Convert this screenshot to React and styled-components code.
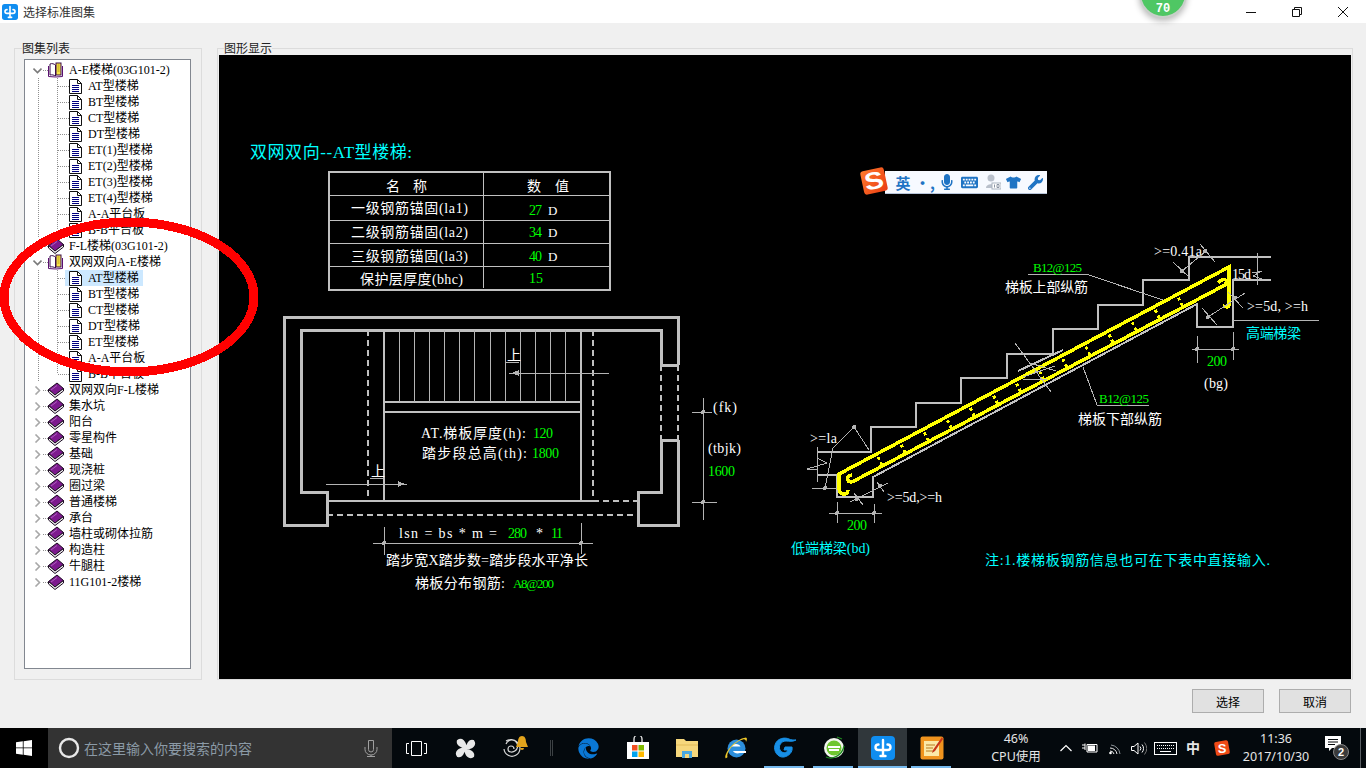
import React from 'react'
import styled, { createGlobalStyle } from 'styled-components'
import { FaMicrophone, FaKeyboard, FaTshirt, FaWrench, FaUser, FaEdge } from 'react-icons/fa'

const Global = createGlobalStyle`
  html, body { margin: 0; padding: 0; overflow: hidden; }
  body { font-family: "Noto Sans CJK SC", "Noto Sans", sans-serif; }
`

const TREE = [
  { label: 'A-E楼梯(03G101-2)', leaves: ['AT型楼梯', 'BT型楼梯', 'CT型楼梯', 'DT型楼梯', 'ET(1)型楼梯', 'ET(2)型楼梯', 'ET(3)型楼梯', 'ET(4)型楼梯', 'A-A平台板', 'B-B平台板'] },
  { label: 'F-L楼梯(03G101-2)' },
  { label: '双网双向A-E楼梯', leaves: ['AT型楼梯', 'BT型楼梯', 'CT型楼梯', 'DT型楼梯', 'ET型楼梯', 'A-A平台板', 'B-B平台板'], selected: 0 },
  { label: '双网双向F-L楼梯' },
  { label: '集水坑' },
  { label: '阳台' },
  { label: '零星构件' },
  { label: '基础' },
  { label: '现浇桩' },
  { label: '圈过梁' },
  { label: '普通楼梯' },
  { label: '承台' },
  { label: '墙柱或砌体拉筋' },
  { label: '构造柱' },
  { label: '牛腿柱' },
  { label: '11G101-2楼梯' },
]

const vdots = 'repeating-linear-gradient(to bottom, #8f8f8f 0 1px, transparent 1px 2px)'
const hdots = 'repeating-linear-gradient(to right, #8f8f8f 0 1px, transparent 1px 2px)'

const Page = styled.div`
  position: relative;
  width: 1366px;
  height: 768px;
  display: flex;
  flex-direction: column;
  overflow: hidden;
  background: #f0f0f0;
`
const TitleBar = styled.div`
  height: 23px;
  background: #fff;
  display: flex;
  align-items: center;
  padding-left: 2px;
  flex: none;
`
const TitleText = styled.span`
  margin-left: 5px;
  font-size: 12px;
  line-height: 16px;
  color: #333;
`
const WinControls = styled.div`
  margin-left: auto;
  display: flex;
`
const WinButton = styled.div`
  width: 46px;
  height: 21px;
  display: flex;
  align-items: center;
  justify-content: center;
`
const Body = styled.div`
  flex: 1;
  min-height: 0;
  display: flex;
  flex-direction: column;
  padding: 18px 13px 0 14px;
`
const Panels = styled.div`
  height: 639px;
  display: flex;
  gap: 15px;
`
const Group = styled.fieldset`
  margin: 0;
  padding: ${p => p.$pad};
  width: ${p => p.$w}px;
  flex: none;
  min-width: 0;
  box-sizing: border-box;
  border: 1px solid #dcdcdc;
`
const Legend = styled.legend`
  margin-left: ${p => p.$ml}px;
  padding: 0;
  font-size: 12px;
  line-height: 14px;
  color: #222;
  font-family: "Noto Sans CJK SC", sans-serif;
`
const TreeBox = styled.div`
  height: 610px;
  box-sizing: border-box;
  border: 1px solid #828790;
  background: #fff;
  padding-top: 2px;
`
const NodeRow = styled.div`
  height: 16px;
  display: flex;
  align-items: center;
  padding-left: 8px;
  font: 12px/16px "Liberation Serif", "Noto Sans CJK SC", serif;
  color: #000;
  white-space: nowrap;
  background: ${hdots} 18px 8px / 5px 1px no-repeat;
`
const LeafRow = styled.div`
  height: 16px;
  display: flex;
  align-items: center;
  padding-left: 40px;
  font: 12px/16px "Liberation Serif", "Noto Sans CJK SC", serif;
  color: #000;
  white-space: nowrap;
  background:
    ${vdots} 13px 0 / 1px 100% no-repeat,
    ${vdots} 32px 0 / 1px ${p => (p.$last ? '8px' : '100%')} no-repeat,
    ${hdots} 33px 8px / 11px 1px no-repeat;
`
const LeafBody = styled.div`
  height: 16px;
  display: flex;
  align-items: center;
  padding: 0 4px;
  gap: 6px;
  background: ${p => (p.$selected ? '#cce8ff' : 'transparent')};
`
const NodeText = styled.span`
  margin-left: 5px;
`
const Canvas = styled.div`
  width: 1132px;
  height: 624px;
  margin-left: 1px;
  background: #000;
`
const Drawing = styled.svg`
  display: block;
  shape-rendering: crispEdges;
`
const Footer = styled.div`
  flex: 1;
  display: flex;
  justify-content: flex-end;
  gap: 15px;
  padding-top: 9px;
  padding-right: 2px;
`
const Button = styled.button`
  width: 72px;
  height: 24px;
  padding: 0;
  border: 1px solid #adadad;
  background: #e1e1e1;
  font: 12px "Noto Sans CJK SC", sans-serif;
  color: #000;
`
const Taskbar = styled.div`
  height: 40px;
  flex: none;
  display: flex;
  background: #04090d;
  color: #e6e6e6;
`
const StartButton = styled.div`
  width: 48px;
  background: #000;
  display: flex;
  align-items: center;
  justify-content: center;
`
const SearchBox = styled.div`
  width: 344px;
  background: #333;
  display: flex;
  align-items: center;
  padding: 0 12px;
  box-sizing: border-box;
  color: #8b9aa6;
  font-size: 14px;
  gap: 4px;
`
const SearchMic = styled.span`
  margin-left: auto;
  margin-right: 2px;
  display: flex;
`
const TaskSlot = styled.div`
  position: relative;
  width: ${p => p.$w || 49}px;
  flex: none;
  display: flex;
  align-items: center;
  justify-content: center;
  background: ${p => (p.$active ? '#30373b' : 'transparent')};
  &::after {
    content: '';
    display: ${p => (p.$open ? 'block' : 'none')};
    position: absolute;
    bottom: 0;
    left: ${p => (p.$active ? 0 : '4px')};
    right: ${p => (p.$active ? 0 : '5px')};
    height: 2px;
    background: #76b9ed;
  }
`
const Tray = styled.div`
  margin-left: auto;
  display: flex;
  align-items: stretch;
`
const TrayItem = styled.div`
  width: ${p => p.$w}px;
  display: flex;
  flex-direction: column;
  align-items: center;
  justify-content: center;
  font: 12.5px/18px "Noto Sans", "Noto Sans CJK SC", sans-serif;
  white-space: nowrap;
`
const ImeChar = styled(TrayItem)`
  font-size: 14px;
  font-weight: 700;
`
const ShowDesktop = styled.div`
  width: 6px;
  border-left: 1px solid #5a5f63;
  box-sizing: border-box;
`
const GreenBall = styled.div`
  position: absolute;
  left: 1139px;
  top: -30px;
  width: 48px;
  height: 48px;
  box-sizing: border-box;
  border-radius: 50%;
  background: #4fc764;
  border: 2px solid #c9cfca;
  box-shadow: 0 3px 6px rgba(0, 0, 0, 0.28);
  color: #fff;
  font: bold 12px/14px "Liberation Mono", monospace;
  text-align: center;
  padding-top: 30px;
`
const ImeBar = styled.div`
  position: absolute;
  left: 862px;
  top: 168px;
  height: 26px;
  display: flex;
  align-items: flex-end;
`
const ImeLogo = styled.div`
  width: 24px;
  height: 24px;
  margin-bottom: 1px;
  z-index: 1;
  border-radius: 3px;
  background: linear-gradient(135deg, #ff7a2d, #ea3c12);
  transform: rotate(-12deg);
  display: flex;
  align-items: center;
  justify-content: center;
  color: #fff;
  font: bold 24px/24px "Liberation Sans", sans-serif;
`
const ImeLetter = styled.span`
  display: block;
  transform: scaleX(1.2);
`
const ImeTools = styled.div`
  width: 162px;
  height: 23px;
  margin-left: -1px;
  padding-left: 10px;
  box-sizing: border-box;
  background: #f7faff;
  border-bottom: 1px solid #b7c4d8;
  display: flex;
  align-items: center;
  color: #1f74c4;
`
const ImeSlot = styled.span`
  width: ${p => p.$w}px;
  flex: none;
  display: flex;
  justify-content: center;
  align-items: center;
  font-weight: 700;
  font-size: 15px;
  color: ${p => p.$color || 'inherit'};
`
const RedRing = styled.svg`
  position: absolute;
  left: 0;
  top: 200px;
  pointer-events: none;
  shape-rendering: crispEdges;
`
const Label = styled.text`
  font-family: "Liberation Serif", "Noto Sans CJK SC", serif;
  font-size: ${p => p.$s || 14}px;
  fill: ${p => p.$c || '#fff'};
  dominant-baseline: central;
`
const Wall = styled.path`
  fill: none;
  stroke: ${p => p.$c || '#c0c0c0'};
  stroke-width: ${p => p.$sw || 2}px;
  stroke-dasharray: ${p => p.$dash || 'none'};
`
const Thin = styled.path`
  fill: none;
  stroke: #b4b4b4;
  stroke-width: 1px;
`
const Bar = styled.path`
  fill: none;
  stroke: #ffff00;
  stroke-width: ${p => p.$sw || 3.5}px;
  stroke-dasharray: ${p => p.$dash || 'none'};
`
const Dot = styled.circle`
  fill: #b4b4b4;
`

function T({ x, y, w, c, s, children }) {
  return <Label x={x} y={y} textLength={w} lengthAdjust="spacing" $c={c} $s={s}>{children}</Label>
}

function Chevron({ open }) {
  return (
    <svg width="9" height="9" viewBox="0 0 9 9" style={{ flex: 'none' }}>
      {open
        ? <path d="M0.5 2.5 L4.5 6.5 L8.5 2.5" fill="none" stroke="#7a7a7a" strokeWidth="1.6" />
        : <path d="M2.5 0.5 L6.5 4.5 L2.5 8.5" fill="none" stroke="#a8a8a8" strokeWidth="1.6" />}
    </svg>
  )
}

function BookClosed() {
  return (
    <svg width="16" height="16" viewBox="0 0 16 16" style={{ marginLeft: 6, flex: 'none' }}>
      <path d="M0.5 7.5 L9 1 L15.5 6.5 L7 13 Z" fill="#7d1a8e" stroke="#1a0a20" />
      <path d="M0.5 7.5 L0.5 10 L7 15.5 L15.5 9 L15.5 6.5 L7 13 Z" fill="#f2f2f2" stroke="#1a0a20" />
      <path d="M3 8 L9 3.5" stroke="#b060c0" />
    </svg>
  )
}

function BookOpen() {
  return (
    <svg width="16" height="16" viewBox="0 0 16 16" style={{ marginLeft: 6, flex: 'none' }}>
      <path d="M2 2 C4 1 6 2 7.5 3 L7.5 14 C6 13 4 12.5 2 13 Z" fill="#fff" stroke="#3a0a4a" />
      <path d="M0.5 4 L0.5 14.5 L7.5 15 L14.5 14.5 L14.5 4" fill="none" stroke="#5a1070" />
      <rect x="8" y="1" width="5" height="12" fill="#f6e24a" stroke="#3a0a4a" />
      <path d="M9.5 3 h2 M9.5 5 h2 M9.5 7 h2 M9.5 9 h2" stroke="#b89a10" />
    </svg>
  )
}

function Doc() {
  return (
    <svg width="13" height="15" viewBox="0 0 13 15" style={{ flex: 'none' }}>
      <path d="M0.5 0.5 H8.5 L12.5 4.5 V14.5 H0.5 Z" fill="#fff" stroke="#111" />
      <path d="M8.5 0.5 V4.5 H12.5" fill="none" stroke="#111" />
      <path d="M3 6.5 H10 M3 8.5 H10 M3 10.5 H10 M3 12.5 H10" stroke="#000080" />
    </svg>
  )
}

function AppGlyph({ size }) {
  return (
    <svg width={size} height={size} viewBox="0 0 24 24" style={{ flex: 'none' }}>
      <rect width="24" height="24" rx="4" fill="#0f8df0" />
      <path d="M12 4 V20 M9.5 20 H14.5 M7.500 8.500 C3.500 8.500 3.500 14 7.500 14 H16.500 C20.500 14 20.500 8.500 16.500 8.500" fill="none" stroke="#fff" strokeWidth="2.4" strokeLinecap="round" />
    </svg>
  )
}

function TreeView() {
  return (
    <TreeBox>
      {TREE.map(node => (
        <React.Fragment key={node.label}>
          <NodeRow>
            <Chevron open={!!node.leaves} />
            {node.leaves ? <BookOpen /> : <BookClosed />}
            <NodeText>{node.label}</NodeText>
          </NodeRow>
          {node.leaves && node.leaves.map((leaf, i) => (
            <LeafRow key={leaf} $last={i === node.leaves.length - 1}>
              <LeafBody $selected={node.selected === i}>
                <Doc />
                <span>{leaf}</span>
              </LeafBody>
            </LeafRow>
          ))}
        </React.Fragment>
      ))}
    </TreeBox>
  )
}

const STAIR_TREADS = [399, 414, 429, 444, 459, 474, 490, 505, 520, 535, 550, 565]

function PlanView() {
  return (
    <g>
      {/* table */}
      <T x={250} y={152} w={162} c="#00ffff" s={17}>双网双向--AT型楼梯:</T>
      <Wall d="M329 172 H610 V290 H329 Z" />
      <Wall $sw={1} d="M483 172 V288 M329 195 H610 M329 220 H610 M329 243 H610 M329 266 H610" />
      <T x={386} y={186} w={41}>名  称</T>
      <T x={527} y={186} w={42}>数  值</T>
      <T x={351} y={208} w={117}>一级钢筋锚固(la1)</T>
      <T x={351} y={232} w={117}>二级钢筋锚固(la2)</T>
      <T x={351} y={256} w={117}>三级钢筋锚固(la3)</T>
      <T x={360} y={279} w={103}>保护层厚度(bhc)</T>
      <T x={529} y={210} w={13} c="#00ff00">27</T>
      <T x={548} y={210} w={7} s={13}>D</T>
      <T x={529} y={232} w={13} c="#00ff00">34</T>
      <T x={548} y={232} w={7} s={13}>D</T>
      <T x={529} y={256} w={13} c="#00ff00">40</T>
      <T x={548} y={256} w={7} s={13}>D</T>
      <T x={529} y={278} w={14} c="#00ff00">15</T>

      {/* plan */}
      <Wall $sw={3} d="M678 365 V317 H284 V525 H327 V492 H301 V330 H661 V365 H678" />
      <Wall $sw={3} d="M678 440 V525 H638 V492 H661 V440 H678" />
      <Wall $dash="6 4" d="M661 365 V440 M678 365 V440 M368 330 V501 M593 330 V501 M593 501 H638 M327 515 H638" />
      <Wall d="M384 330 V501 M581 330 V501 M327 501 H593 M384 402 H581 M384 412 H581" />
      <Thin d={STAIR_TREADS.map(x => `M${x} 330 V402`).join(' ')} />
      <T x={507} y={355} w={12}>上</T>
      <Thin d="M506 362 H519 M509 373 H609" />
      <path d="M512 373 L519 370 V376 Z" fill="#b4b4b4" />
      <T x={371} y={471} w={12}>上</T>
      <Thin d="M370 478 H383 M326 484 H407" />
      <path d="M405 484 L398 481 V487 Z" fill="#b4b4b4" />
      <T x={421} y={433} w={105}>AT.梯板厚度(h):</T>
      <T x={533} y={433} w={20} c="#00ff00">120</T>
      <T x={422} y={453} w={105}>踏步段总高(th):</T>
      <T x={532} y={453} w={27} c="#00ff00">1800</T>

      {/* dims */}
      <Thin d="M703 398 V520 M692 412 H712 M692 502 H717" />
      <Dot cx={703} cy={412} r={2} />
      <Dot cx={703} cy={502} r={2} />
      <T x={713} y={407} w={24}>(fk)</T>
      <T x={708} y={448} w={33}>(tbjk)</T>
      <T x={708} y={471} w={27} c="#00ff00">1600</T>
      <Thin d="M373 543 H593 M384 527 V555 M581 523 V554" />
      <Dot cx={384} cy={543} r={2} />
      <Dot cx={581} cy={543} r={2} />
      <T x={399} y={533} w={98}>lsn = bs * m =</T>
      <T x={508} y={533} w={19} c="#00ff00">280</T>
      <T x={536} y={533} w={6}>*</T>
      <T x={551} y={533} w={12} c="#00ff00">11</T>
      <T x={386} y={560} w={202}>踏步宽X踏步数=踏步段水平净长</T>
      <T x={415} y={583} w={90}>梯板分布钢筋:</T>
      <T x={513} y={583} w={41} c="#00ff00" s={13}>A8@200</T>
    </g>
  )
}

function SectionView() {
  const stirrups = Array.from({ length: 14 }, (_, i) => {
    const x = 878 + i * 23.1
    const y = 457 - i * 12.25
    return `M${x} ${y} l4 8`
  }).join(' ')
  return (
    <g>
      <Wall d="M817 452 H871 V427 H916 V403 H961 V378 H1007 V354 H1053 V329 H1098 V305 H1143 V280 H1189 V257 H1271" />
      <Wall d="M1271 280 H1233 V327 H1197 V304 L873 477 V497 H837 V475 H817" />
      <Wall d="M1018 371 L1063 350" />
      <Bar d="M848 490 C848 496 839 496 839 488 V474 L1229 267 V304 C1229 308 1226 307 1223 306" />
      <Bar d="M852 482 C846 482 846 476 852 475 M852 482 L1225 285 C1229 280 1224 277 1218 283" />
      <Bar $sw={3} $dash="3 3" d={stirrups} />

      <Thin d="M1015 343 L1051 392 M1023 377 L1055 366 M1023 380 L1047 379 M1030 363 L1056 371" />
      <Thin d="M1028 274 H1086 L1163 300" />
      <T x={1033} y={267} w={49} c="#00ff00" s={13}>B12@125</T>
      <T x={1005} y={287} w={83}>梯板上部纵筋</T>
      <T x={1154} y={251} w={48}>&gt;=0.41a</T>
      <Thin d="M1182 271 L1206 251 M1173 262 L1190 278 M1200 244 L1215 262 M1257 253 V285 M1252 273 L1262 271 L1253 276 L1262 279" />
      <Dot cx={1182} cy={271} r={2} />
      <Dot cx={1205} cy={251} r={2} />
      <T x={1232} y={274} w={19}>15d</T>
      <T x={1247} y={306} w={61}>&gt;=5d, &gt;=h</T>
      <Thin d="M1208 317 L1245 293 M1202 308 L1217 325 M1228 292 L1243 308 M1233 320 H1319" />
      <Dot cx={1208} cy={317} r={2} />
      <Dot cx={1235} cy={298} r={2} />
      <T x={1246} y={333} w={55} c="#00ffff">高端梯梁</T>
      <Thin d="M1192 349 H1239 M1197 336 V363 M1233 332 V360" />
      <Dot cx={1197} cy={349} r={2} />
      <Dot cx={1233} cy={349} r={2} />
      <T x={1207} y={361} w={20} c="#00ff00">200</T>
      <T x={1204} y={383} w={24}>(bg)</T>
      <Thin d="M1083 367 L1097 405 H1149" />
      <T x={1099} y={398} w={50} c="#00ff00" s={13}>B12@125</T>
      <T x={1078} y={419} w={84}>梯板下部纵筋</T>

      <T x={810} y={438} w={27}>&gt;=la</T>
      <Thin d="M833 448 L854 427 L869 450 M833 448 L825 488 M812 488 H837 M817 447 V482 M817 458 L827 463 L807 469 H817" />
      <Dot cx={854} cy={427} r={2} />
      <Dot cx={825} cy={488} r={2} />
      <T x={887} y={497} w={55}>&gt;=5d,&gt;=h</T>
      <Thin d="M850 502 L888 483 M854 493 L863 505 M877 482 L884 492" />
      <Dot cx={857} cy={499} r={2} />
      <Dot cx={880} cy={486} r={2} />
      <Thin d="M829 513 H882 M837 502 V523 M874 504 V523" />
      <Dot cx={837} cy={513} r={2} />
      <Dot cx={874} cy={513} r={2} />
      <T x={847} y={525} w={20} c="#00ff00">200</T>
      <T x={791} y={548} w={79} c="#00ffff">低端梯梁(bd)</T>
      <T x={985} y={560} w={285} c="#00ffff">注:1.楼梯板钢筋信息也可在下表中直接输入.</T>
    </g>
  )
}

function WinLogo() {
  return (
    <svg width="16" height="16" viewBox="0 0 16 16">
      <path d="M0 2.3 L6.8 1.3 V7.5 H0 Z M7.6 1.2 L16 0 V7.5 H7.6 Z M0 8.3 H6.8 V14.7 L0 13.7 Z M7.6 8.3 H16 V16 L7.6 14.8 Z" fill="#fff" />
    </svg>
  )
}

function Tile({ children, size = 24 }) {
  return <svg width={size} height={size} viewBox="0 0 24 24">{children}</svg>
}

export default function App() {
  return (
    <Page>
      <Global />
      <TitleBar>
        <AppGlyph size={16} />
        <TitleText>选择标准图集</TitleText>
        <WinControls>
          <WinButton>
            <svg width="10" height="10"><path d="M0 5.5 H10" stroke="#111" /></svg>
          </WinButton>
          <WinButton>
            <svg width="10" height="10"><path d="M0.5 2.5 H7.5 V9.5 H0.5 Z M2.5 2.5 V0.5 H9.5 V7.5 H7.5" fill="none" stroke="#111" /></svg>
          </WinButton>
          <WinButton>
            <svg width="10" height="10"><path d="M0 0 L10 10 M10 0 L0 10" stroke="#111" /></svg>
          </WinButton>
        </WinControls>
      </TitleBar>

      <Body>
        <Panels>
          <Group $w={188} $pad="4px 10px 0 9px">
            <Legend $ml={-2}>图集列表</Legend>
            <TreeView />
          </Group>
          <Group $w={1136} $pad="0 0 0 0">
            <Legend $ml={6}>图形显示</Legend>
            <Canvas>
              <Drawing width="1132" height="624" viewBox="219 55 1132 624">
                <PlanView />
                <SectionView />
              </Drawing>
            </Canvas>
          </Group>
        </Panels>
        <Footer>
          <Button>选择</Button>
          <Button>取消</Button>
        </Footer>
      </Body>

      <Taskbar>
        <StartButton><WinLogo /></StartButton>
        <SearchBox>
          <svg width="22" height="22" viewBox="0 0 22 22" style={{ flex: 'none', marginLeft: -2 }}>
            <circle cx="11" cy="11" r="9" fill="none" stroke="#e8e8e8" strokeWidth="2.4" />
          </svg>
          <span>在这里输入你要搜索的内容</span>
          <SearchMic>
            <svg width="14" height="18" viewBox="0 0 14 18">
              <path d="M4.5 1.5 h5 v9 a2.5 2.5 0 0 1 -5 0 Z M1 8 v2.5 a6 5.5 0 0 0 12 0 V8 M7 16 v1.5 M3 17.5 h8" fill="none" stroke="#a0a0a0" />
            </svg>
          </SearchMic>
        </SearchBox>
        <TaskSlot $w={48}>
          <svg width="21" height="15" viewBox="0 0 21 15">
            <path d="M5.5 0.5 H15.5 V14.5 H5.5 Z M3 2.5 H0.5 V12.5 H3 M18 2.5 H20.5 V12.5 H18" fill="none" stroke="#fff" />
          </svg>
        </TaskSlot>
        <TaskSlot $w={50}>
          <Tile size={23}>
            <path d="M12 11 C7 10 3 8 4 4 C8 1 12 5 12 11 Z M13 12 C14 7 16 3 20 4 C23 8 19 12 13 12 Z M12 13 C17 14 21 16 20 20 C16 23 12 19 12 13 Z M11 12 C10 17 8 21 4 20 C1 16 5 12 11 12 Z" fill="#e8e8e8" stroke="#e8e8e8" strokeWidth="2" />
          </Tile>
        </TaskSlot>
        <TaskSlot $w={49}>
          <svg width="30" height="26" viewBox="0 0 30 26">
            <path d="M14 14 a3 3 0 1 0 -3 3 a6 6 0 1 0 -5 -8 M4 14 a8 8 0 1 0 13 -7 a9 9 0 0 0 -11 -1" fill="none" stroke="#d8d8d8" strokeWidth="1.2" />
            <path d="M22 1 C25 1 26 4 26 7 L28 12 H16 L18 7 C18 4 19 1 22 1 Z M20 13 a2 2 0 0 0 4 0 Z" fill="#e3a41c" />
          </svg>
        </TaskSlot>
        <TaskSlot $w={25}>
          <svg width="3" height="16"><path d="M0.5 0 V16 M2.5 0 V16" stroke="#3c4144" /></svg>
        </TaskSlot>
        <TaskSlot>
          <FaEdge size={21} color="#0a78d6" />
        </TaskSlot>
        <TaskSlot>
          <Tile>
            <path d="M1 6 H23 V23 H1 Z" fill="#fff" />
            <path d="M8 6 V3 a4 4 0 0 1 8 0 V6" fill="none" stroke="#ddd" strokeWidth="1.4" />
            <rect x="6" y="9" width="5.5" height="5.5" fill="#f25022" />
            <rect x="12.5" y="9" width="5.5" height="5.5" fill="#7fba00" />
            <rect x="6" y="15.5" width="5.5" height="5.5" fill="#00a4ef" />
            <rect x="12.5" y="15.5" width="5.5" height="5.5" fill="#ffb900" />
          </Tile>
        </TaskSlot>
        <TaskSlot>
          <Tile>
            <path d="M1 3 H9 L11 5 H23 V21 H1 Z" fill="#f6d77c" />
            <path d="M1 9 H23" stroke="#e2bb58" />
            <path d="M7 22 V15 H17 V22 Z" fill="#4aa8e0" />
            <path d="M10 22 V18 H14 V22 Z" fill="#f6d77c" />
          </Tile>
        </TaskSlot>
        <TaskSlot>
          <Tile>
            <circle cx="12.5" cy="12.5" r="9" fill="#2c8fdd" />
            <path d="M7.5 10.5 C8.5 7 15.5 7 16.5 10.5 Z M9 15 H22 V17 H16 C13 18 10 17 9 15 Z" fill="#fff" />
            <path d="M1.5 22 C0 17 11 3 22 1.5 C23.500 2 23 4 22 6 C22 4 21 3 19 3.500 C11 5 2 16 3.500 21 C3 22 2 22.500 1.5 22 Z" fill="#f0c92a" />
          </Tile>
        </TaskSlot>
        <TaskSlot $open>
          <Tile>
            <path d="M16 3 C12 1 4 2 2 9 C0 15 5 22 11 21 C16 20 20 16 19 11 H12 L11 14 H15 C14 17 9 18 7 14 C5 10 8 5 13 5 C16 5 20 6 23 4 C20 4 18 4 16 3 Z" fill="#178fe6" stroke="#178fe6" />
          </Tile>
        </TaskSlot>
        <TaskSlot $open>
          <Tile>
            <circle cx="12" cy="12" r="10" fill="#f2f6ee" />
            <circle cx="12" cy="12" r="7.5" fill="#6fc62f" />
            <path d="M6 11 H18 M7 14 H17" stroke="#fff" strokeWidth="2" />
            <path d="M4 21 C10 24 20 20 22 10 M20 3 L15 1" fill="none" stroke="#1f8a1f" strokeWidth="1.3" />
          </Tile>
        </TaskSlot>
        <TaskSlot $open $active>
          <AppGlyph size={24} />
        </TaskSlot>
        <TaskSlot $open>
          <Tile>
            <rect x="0.5" y="0.5" width="23" height="23" rx="2" fill="#f0941e" />
            <path d="M4 5 H19 V20 H4 Z" fill="#fbe9a8" />
            <path d="M6 9 H15 M6 12 H13 M6 15 H14" stroke="#b77a20" />
            <path d="M22 1 L13 14 L12 17 L15 15 L23 3 Z" fill="#c8351a" />
          </Tile>
        </TaskSlot>
        <Tray>
          <TrayItem $w={64}><span>46%</span><span>CPU使用</span></TrayItem>
          <TrayItem $w={6} />
          <TrayItem $w={24}>
            <svg width="12" height="8"><path d="M0.5 7 L6 1.5 L11.5 7" fill="none" stroke="#fff" strokeWidth="1.2" /></svg>
          </TrayItem>
          <TrayItem $w={24}>
            <svg width="16" height="12" viewBox="0 0 16 12">
              <path d="M5 2.5 H15 V10 H5 Z" fill="none" stroke="#fff" />
              <rect x="6" y="3.5" width="7" height="5.5" fill="#fff" />
              <path d="M0 3 H3 M0 6 H3 M3 1.5 V8" stroke="#fff" />
            </svg>
          </TrayItem>
          <TrayItem $w={25}>
            <svg width="14" height="13" viewBox="0 0 14 13">
              <circle cx="2.5" cy="11" r="1.3" fill="#fff" />
              <path d="M2 9 a4 4 0 0 1 4 3 M2 6 a7 7 0 0 1 7 6" fill="none" stroke="#eee" />
              <path d="M3 3 a10 10 0 0 1 9 9" fill="none" stroke="#8d9499" />
            </svg>
          </TrayItem>
          <TrayItem $w={23}>
            <svg width="16" height="13" viewBox="0 0 16 13">
              <path d="M0.5 4.5 H3 L7 1 V12 L3 8.5 H0.5 Z" fill="none" stroke="#fff" />
              <path d="M9 4.5 a3 3 0 0 1 0 4 M11 2.5 a6 6 0 0 1 0 8" fill="none" stroke="#fff" />
              <path d="M13.5 0.5 a10 10 0 0 1 0 12" fill="none" stroke="#777" />
            </svg>
          </TrayItem>
          <TrayItem $w={30}>
            <svg width="23" height="13" viewBox="0 0 23 13">
              <rect x="0.5" y="0.5" width="22" height="12" fill="none" stroke="#fff" />
              <path d="M3 3.5 H20 M3 6.5 H20" stroke="#fff" strokeDasharray="1 1" />
              <path d="M6 9.5 H17" stroke="#fff" />
            </svg>
          </TrayItem>
          <ImeChar $w={26}>中</ImeChar>
          <TrayItem $w={32}>
            <svg width="16" height="16" viewBox="0 0 16 16">
              <rect x="1" y="1" width="14" height="14" rx="2" fill="#ef4a16" transform="rotate(-10 8 8)" />
              <text x="8" y="12.5" textAnchor="middle" fontSize="13" fontWeight="700" fill="#fff" fontFamily="Liberation Sans">S</text>
            </svg>
          </TrayItem>
          <TrayItem $w={76}><span>11:36</span><span>2017/10/30</span></TrayItem>
          <TrayItem $w={46}>
            <svg width="26" height="26" viewBox="0 0 26 26">
              <path d="M1 1 H17 V13 H8 L5 16 V13 H1 Z" fill="#fff" />
              <path d="M4 4.5 H14 M4 7 H14 M4 9.5 H11" stroke="#04090d" />
              <circle cx="17" cy="17" r="7.5" fill="#3a3a3a" stroke="#888" />
              <text x="17" y="21" textAnchor="middle" fontSize="11" fontWeight="700" fill="#fff" fontFamily="Liberation Sans">2</text>
            </svg>
          </TrayItem>
          <ShowDesktop />
        </Tray>
      </Taskbar>

      <GreenBall>70</GreenBall>

      <ImeBar>
        <ImeLogo><ImeLetter>S</ImeLetter></ImeLogo>
        <ImeTools>
          <ImeSlot $w={16}>英</ImeSlot>
          <ImeSlot $w={28}>•,</ImeSlot>
          <ImeSlot $w={16}><FaMicrophone size={16} /></ImeSlot>
          <ImeSlot $w={28}><FaKeyboard size={17} /></ImeSlot>
          <ImeSlot $w={20} $color="#b9c0cb">
            <svg width="16" height="16" viewBox="0 0 16 16">
              <circle cx="6" cy="4" r="3.5" fill="#b9c0cb" />
              <path d="M1 14 C1 9 11 9 11 14 Z" fill="#b9c0cb" />
              <rect x="7" y="9" width="9" height="6" fill="#fff" stroke="#aab3c0" />
              <path d="M9.5 10.5 V13.5 M12 10.5 H14 V13.5 H12 Z" stroke="#8a94a3" fill="none" />
            </svg>
          </ImeSlot>
          <ImeSlot $w={20}><FaTshirt size={15} /></ImeSlot>
          <ImeSlot $w={24}><FaWrench size={15} /></ImeSlot>
        </ImeTools>
      </ImeBar>

      <RedRing width="270" height="190" viewBox="0 200 270 190">
        <ellipse cx="129" cy="297" rx="125" ry="75" fill="none" stroke="#ff0000" strokeWidth="9" />
      </RedRing>
    </Page>
  )
}
